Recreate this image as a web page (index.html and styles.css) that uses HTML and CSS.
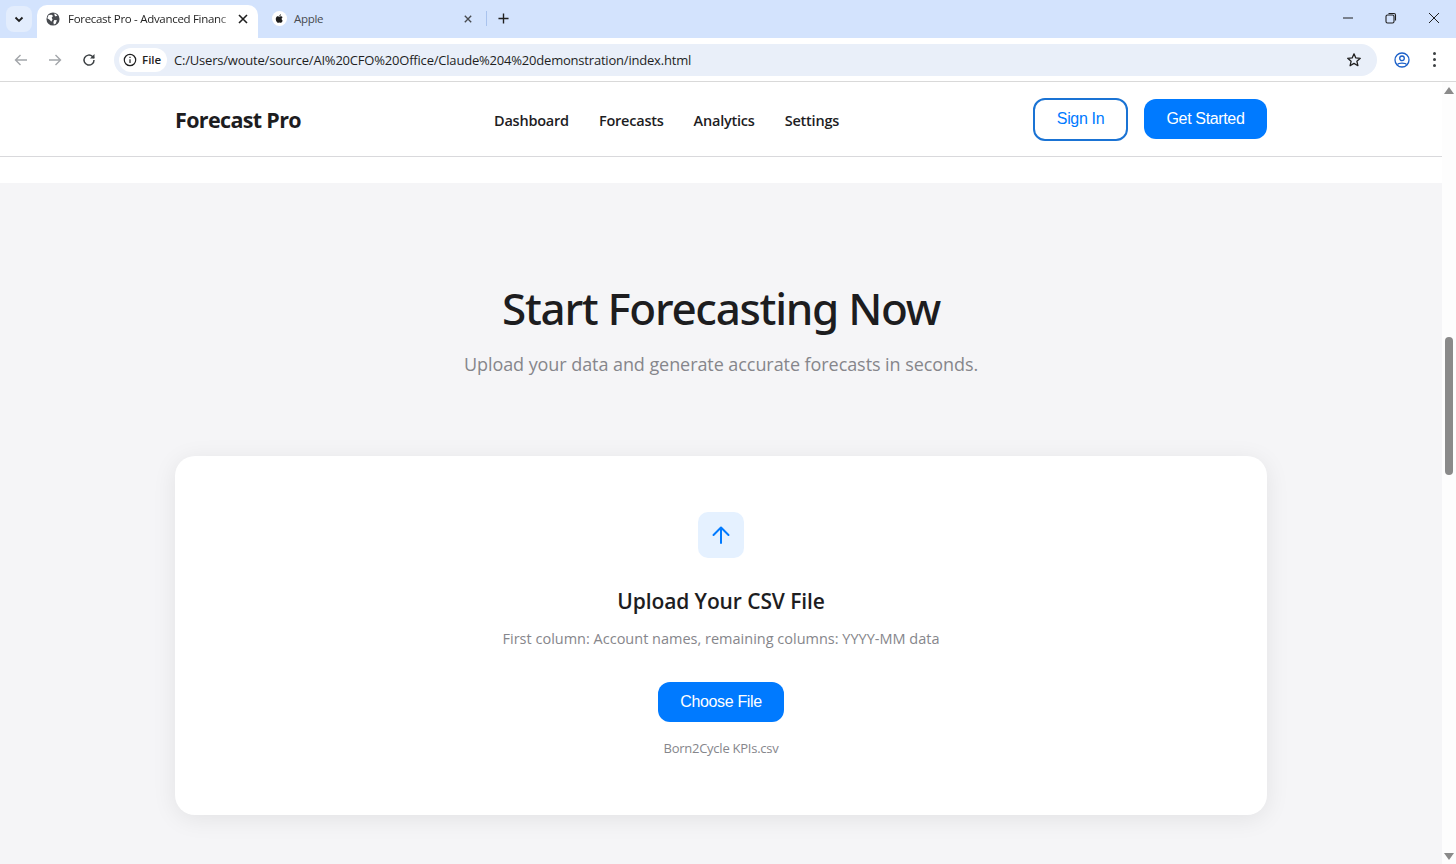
FILE: index.html
```html
<!DOCTYPE html>
<html lang="en">
<head>
  <meta charset="UTF-8">
  <title>Forecast Pro - Advanced Financial Forecasting</title>
  <link rel="stylesheet" href="styles.css">
</head>
<body>

  <!-- browser tabs -->
  <div class="tabstrip">
    <div class="tab-menu">
      <svg width="10" height="7" viewBox="0 0 10 7"><path d="M1.5 1.5 5 5l3.5-3.5" fill="none" stroke="#1f1f1f" stroke-width="1.8"/></svg>
    </div>
    <div class="tab tab-active">
      <svg class="favicon" width="14" height="14" viewBox="0 0 16 16"><circle cx="8" cy="8" r="7.5" fill="#474a4f"/><path d="M3 3.500 6.500 3 8 4.500 6.500 6.500 7.500 8.500 6 11 4.500 9 1.500 7ZM9.500 9l3 .5-1.500 4-2 .8-.6-3ZM10 1.500l3 2.500-2 1-1.500-1.500Z" fill="#fff"/></svg>
      <span class="tab-title tab-fade">Forecast Pro - Advanced Financ</span>
      <svg class="tab-close" width="10" height="10" viewBox="0 0 10 10"><path d="M1 1l8 8M9 1 1 9" stroke="#1f1f1f" stroke-width="1.6"/></svg>
    </div>
    <div class="tab tab-other">
      <svg class="favicon" width="15" height="15" viewBox="0 0 16 16"><circle cx="8" cy="8" r="8" fill="#fff"/><path d="M10.300 8.300c0-1.100.9-1.600 1-1.700-.5-.8-1.400-.9-1.700-.9-.7-.1-1.400.4-1.800.4s-.9-.4-1.500-.4c-.8 0-1.500.5-1.900 1.200-.8 1.400-.2 3.500.6 4.600.4.500.8 1.100 1.400 1.100s.8-.4 1.500-.4 .9.400 1.500.4 1-.6 1.400-1.100c.4-.6.6-1.200.6-1.300-.1 0-1.100-.4-1.100-1.900ZM9.100 4.900c.3-.4.500-.9.500-1.400-.5 0-1 .3-1.300.7-.3.300-.5.800-.5 1.300.5 0 1-.2 1.300-.6Z" fill="#1f1f1f"/></svg>
      <span class="tab-title">Apple</span>
      <svg class="tab-close" width="8" height="8" viewBox="0 0 10 10"><path d="M1 1l8 8M9 1 1 9" stroke="#474a4f" stroke-width="1.700"/></svg>
    </div>
    <div class="tab-sep"></div>
    <svg class="tab-new" width="11" height="11" viewBox="0 0 12 12"><path d="M6 .5v11M.5 6h11" stroke="#1f1f1f" stroke-width="1.500"/></svg>
    <div class="win-buttons">
      <svg width="12" height="12" viewBox="0 0 12 12"><path d="M1 6h10" stroke="#1f1f1f" stroke-width="1"/></svg>
      <svg width="12" height="12" viewBox="0 0 12 12"><rect x="1" y="3" width="8" height="8" rx="1.500" fill="none" stroke="#1f1f1f" stroke-width="1.100"/><path d="M3.500 1.500H9A1.500 1.500 0 0 1 10.500 3v5.500" fill="none" stroke="#1f1f1f" stroke-width="1.100"/></svg>
      <svg width="12" height="12" viewBox="0 0 12 12"><path d="M1 1l10 10M11 1 1 11" stroke="#1f1f1f" stroke-width="1"/></svg>
    </div>
  </div>

  <!-- address bar -->
  <div class="toolbar">
    <svg class="tool-icon" width="16" height="16" viewBox="0 0 16 16"><path d="M14 8H3M7.500 3 2.500 8l5 5" fill="none" stroke="#a3a6aa" stroke-width="1.400"/></svg>
    <svg class="tool-icon" width="16" height="16" viewBox="0 0 16 16"><path d="M2 8h11M8.500 3l5 5-5 5" fill="none" stroke="#a3a6aa" stroke-width="1.400"/></svg>
    <svg class="tool-icon" width="16" height="16" viewBox="0 0 16 16"><path d="M13 8a5 5 0 1 1-1.500-3.500L13 6" fill="none" stroke="#3c4043" stroke-width="1.500"/><path d="M13.500 2v4.500H9z" fill="#3c4043"/></svg>
    <div class="omnibox">
      <div class="site-chip">
        <svg width="14" height="14" viewBox="0 0 14 14"><circle cx="7" cy="7" r="5.700" fill="none" stroke="#1f1f1f" stroke-width="1.200"/><path d="M7 6.200v3.800M7 3.800v1.200" stroke="#1f1f1f" stroke-width="1.200"/></svg>
        <span>File</span>
      </div>
      <span class="url">C:/Users/woute/source/AI%20CFO%20Office/Claude%204%20demonstration/index.html</span>
      <svg class="star" width="16" height="16" viewBox="0 0 16 16"><path d="M8 1.800l1.800 4.100 4.500.4-3.400 3 1 4.400L8 11.400l-3.900 2.300 1-4.400-3.400-3 4.500-.4z" fill="none" stroke="#1f1f1f" stroke-width="1.300" stroke-linejoin="round"/></svg>
    </div>
    <svg class="profile" width="16" height="16" viewBox="0 0 16 16"><circle cx="8" cy="8" r="7" fill="none" stroke="#1a5fc8" stroke-width="1.300"/><circle cx="8" cy="6.300" r="2.300" fill="none" stroke="#1a5fc8" stroke-width="1.300"/><path d="M3.500 12.500c1-1.800 8-1.800 9 0" fill="none" stroke="#1a5fc8" stroke-width="1.300"/></svg>
    <div class="kebab"><i></i><i></i><i></i></div>
  </div>

  <div class="viewport">
    <div class="page">
      <nav class="navbar">
        <div class="logo">Forecast Pro</div>
        <div class="nav-links">
          <a>Dashboard</a>
          <a>Forecasts</a>
          <a>Analytics</a>
          <a>Settings</a>
        </div>
        <div class="nav-actions">
          <button class="btn btn-outline">Sign In</button>
          <button class="btn btn-primary">Get Started</button>
        </div>
      </nav>

      <section class="forecast">
        <h1>Start Forecasting Now</h1>
        <p class="subtitle">Upload your data and generate accurate forecasts in seconds.</p>

        <div class="upload-card">
          <div class="upload-icon">
            <svg width="20" height="20" viewBox="0 0 20 20"><path d="M10 18V3M2.500 10 10 2.500 17.500 10" fill="none" stroke="#007aff" stroke-width="2" stroke-linecap="round" stroke-linejoin="round"/></svg>
          </div>
          <h3>Upload Your CSV File</h3>
          <p class="hint">First column: Account names, remaining columns: YYYY-MM data</p>
          <button class="btn btn-primary btn-file">Choose File</button>
          <p class="filename">Born2Cycle KPIs.csv</p>
        </div>
      </section>
    </div>

    <div class="scrollbar">
      <div class="arrow-up"></div>
      <div class="thumb"></div>
      <div class="arrow-down"></div>
    </div>
  </div>

</body>
</html>
```

FILE: styles.css
```css
html, body {
  margin: 0;
  height: 864px;
  overflow: hidden;
}
body {
  font-family: "Open Sans", "Noto Sans", sans-serif;
  background-color: #ffffff;
  color: #1d1d1f;
  display: flex;
  flex-direction: column;
}

/* tabs */
.tabstrip {
  height: 38px;
  flex: none;
  background-color: #d3e3fd;
  display: flex;
  align-items: flex-end;
  padding-left: 6px;
}
.tab-menu {
  width: 26px;
  height: 26px;
  margin-bottom: 6px;
  border-radius: 8px;
  background-color: #e3edfd;
  display: flex;
  align-items: center;
  justify-content: center;
}
.tab {
  height: 33px;
  width: 221px;
  box-sizing: border-box;
  display: flex;
  align-items: center;
  padding: 0 10px 6px 9px;
  font-size: 11.5px;
  letter-spacing: -0.3px;
  color: #3c4043;
}
.tab-active {
  margin-left: 5px;
  background-color: #ffffff;
  border-radius: 10px 10px 0 0;
  color: #1f1f1f;
}
.tab-other {
  padding-left: 14px;
  padding-right: 7px;
  color: #474a4f;
}
.favicon {
  flex: none;
  margin-right: 7px;
}
.tab-active .favicon {
  margin-right: 8px;
}
.tab-title {
  flex: 1;
  white-space: nowrap;
}
.tab-fade {
  -webkit-mask-image: linear-gradient(to right, #000 88%, transparent 100%);
  mask-image: linear-gradient(to right, #000 88%, transparent 100%);
}
.tab-close {
  flex: none;
}
.tab-sep {
  width: 1px;
  height: 15px;
  margin: 0 0 12px 7px;
  background-color: #a9c3ee;
}
.tab-new {
  margin: 0 0 14px 11px;
}
.win-buttons {
  margin-left: auto;
  align-self: flex-start;
  display: flex;
  gap: 31px;
  padding: 12px 16px 0 0;
}

/* address bar */
.toolbar {
  height: 43px;
  flex: none;
  background-color: #ffffff;
  border-bottom: 1px solid #d9d9d9;
  display: flex;
  align-items: center;
  padding-left: 13px;
}
.tool-icon {
  flex: none;
  margin-right: 18px;
}
.omnibox {
  width: 1263px;
  height: 32px;
  margin-left: -1px;
  box-sizing: border-box;
  border-radius: 16px;
  background-color: #e9eff9;
  display: flex;
  align-items: center;
  padding: 0 15px 0 5px;
}
.site-chip {
  height: 24px;
  width: 48px;
  box-sizing: border-box;
  background-color: #ffffff;
  border-radius: 12px;
  display: flex;
  align-items: center;
  gap: 5px;
  padding-left: 4px;
  font-size: 11.5px;
  font-weight: 600;
  color: #1f1f1f;
}
.url {
  margin-left: 7px;
  font-size: 13px;
  letter-spacing: -0.2px;
  color: #1f1f1f;
}
.star {
  margin-left: auto;
}
.profile {
  margin-left: 17px;
}
.kebab {
  margin-left: 23px;
  display: flex;
  flex-direction: column;
  gap: 3px;
}
.kebab i {
  width: 3px;
  height: 3px;
  border-radius: 50%;
  background-color: #3c4043;
}

/* page */
.viewport {
  flex: 1;
  display: flex;
  min-height: 0;
}
.page {
  flex: 1;
  min-width: 0;
}
.navbar {
  height: 74px;
  border-bottom: 1px solid #d9d9dc;
  margin-bottom: 26px;
  padding: 0 175px;
  display: flex;
  align-items: center;
}
.logo {
  font-size: 21.5px;
  font-weight: 700;
  letter-spacing: -0.65px;
  color: #1d1d1f;
  width: 319px;
}
.nav-links {
  display: flex;
  gap: 30px;
  padding-top: 2px;
  font-size: 14.5px;
  font-weight: 600;
  letter-spacing: -0.22px;
  color: #1d1d1f;
}
.nav-actions {
  margin-left: auto;
  display: flex;
  align-items: center;
  gap: 16px;
}
.btn {
  font-family: "Liberation Sans", Arial, sans-serif;
  font-size: 16px;
  letter-spacing: -0.35px;
  padding: 0 0 1px;
  border-radius: 12px;
  cursor: pointer;
}
.btn-outline {
  width: 95px;
  height: 43px;
  background-color: #ffffff;
  color: #007aff;
  border: 2px solid #1a73d4;
}
.btn-primary {
  width: 123px;
  height: 40px;
  background-color: #007aff;
  color: #ffffff;
  border: none;
}
.forecast {
  background-color: #f5f5f7;
  height: 681px;
  text-align: center;
  padding-top: 95px;
  box-sizing: border-box;
}
.forecast h1 {
  margin: 0;
  font-family: "Noto Sans", "Open Sans", sans-serif;
  font-size: 44px;
  line-height: 60px;
  font-weight: 500;
  letter-spacing: -1.3px;
  color: #1d1d1f;
}
.subtitle {
  margin: 12px 0 0;
  font-size: 18px;
  line-height: 28px;
  letter-spacing: -0.07px;
  color: #86868b;
}
.upload-card {
  width: 1092px;
  height: 359px;
  box-sizing: border-box;
  margin: 78px auto 0;
  padding-top: 56px;
  background-color: #ffffff;
  border-radius: 20px;
  box-shadow: 0 4px 24px rgba(0, 0, 0, 0.08);
}
.upload-icon {
  width: 46px;
  height: 46px;
  margin: 0 auto;
  border-radius: 10px;
  background-color: #e5f1ff;
  display: flex;
  align-items: center;
  justify-content: center;
}
.upload-card h3 {
  margin: 26px 0 0;
  font-size: 21px;
  line-height: 34px;
  font-weight: 600;
  letter-spacing: -0.1px;
  color: #1d1d1f;
}
.hint {
  margin: 11px 0 0;
  font-size: 14.5px;
  line-height: 20px;
  color: #86868b;
}
.btn-file {
  margin-top: 33px;
  width: 126px;
}
.filename {
  margin: 16px 0 0;
  font-size: 13px;
  line-height: 20px;
  letter-spacing: -0.25px;
  color: #86868b;
}

/* scrollbar */
.scrollbar {
  width: 14px;
  flex: none;
  background-color: #fdfdfd;
  display: flex;
  flex-direction: column;
  align-items: center;
}
.arrow-up {
  margin-top: 5px;
  border-left: 5px solid transparent;
  border-right: 5px solid transparent;
  border-bottom: 7px solid #8a8a8a;
}
.thumb {
  width: 8px;
  height: 138px;
  margin-top: 243px;
  border-radius: 4px;
  background-color: #8a8a8a;
}
.arrow-down {
  margin-top: auto;
  margin-bottom: 4px;
  border-left: 5px solid transparent;
  border-right: 5px solid transparent;
  border-top: 7px solid #8a8a8a;
}
```
